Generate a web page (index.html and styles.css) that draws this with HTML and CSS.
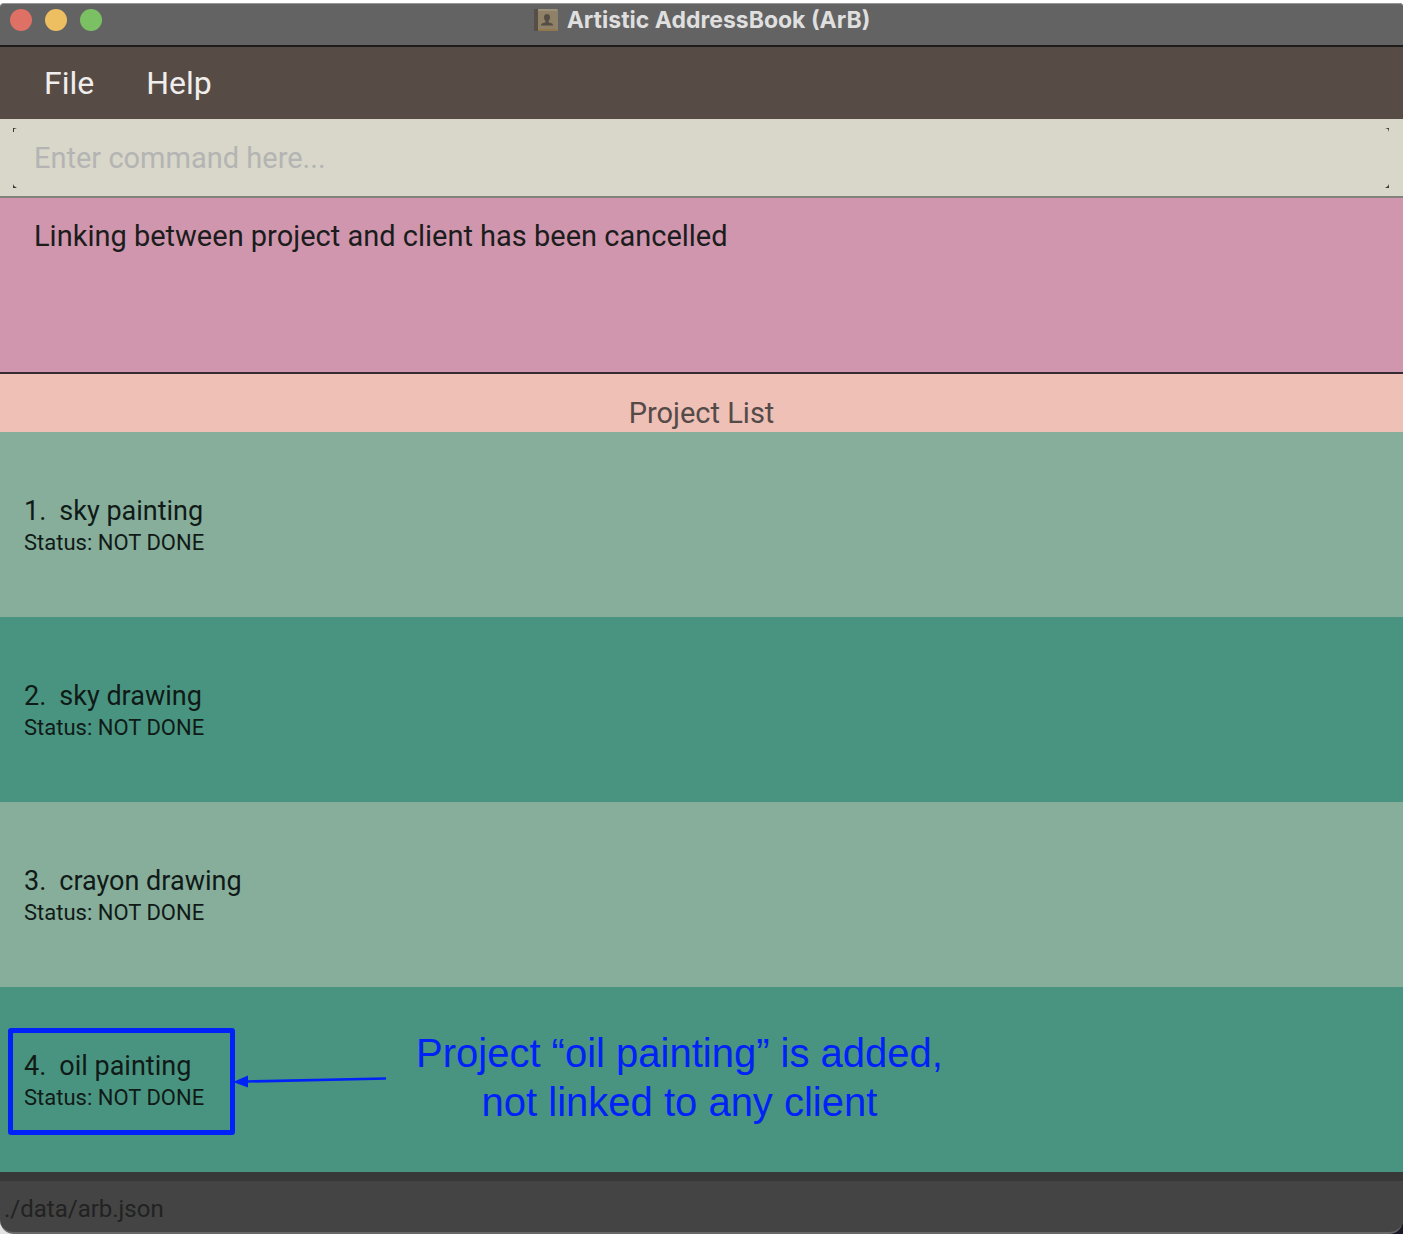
FILE: index.html
```html
<!DOCTYPE html>
<html lang="en">
<head>
<meta charset="utf-8">
<title>Artistic AddressBook (ArB)</title>
<link rel="stylesheet" href="styles.css">
</head>
<body>
<div class="window">
  <header class="titlebar">
    <div class="controls">
      <button class="control control-close" aria-label="Close"></button>
      <button class="control control-minimize" aria-label="Minimize"></button>
      <button class="control control-zoom" aria-label="Zoom"></button>
    </div>
    <h1 class="title">
      <svg class="title-icon" viewBox="0 0 26 24" aria-hidden="true">
        <rect x="1" y="1" width="24" height="22" rx="1" fill="#8f8168"/>
        <rect x="1" y="1" width="4" height="22" fill="#574f47"/>
        <path d="M5 1H24V3H5z" fill="#9b9078"/>
        <path d="M5 21H24V23H5z" fill="#94784d"/>
        <path d="M14 6c-2 0-3 1.500-3 3.500 0 1.500.7 2.800 1.500 3.500v1.200L9 15.500c-.8.400-1 1-1 2h12c0-1-.2-1.600-1-2l-3.500-1.300V13c.8-.7 1.500-2 1.500-3.500C17 7.500 16 6 14 6z" fill="#554d43"/>
      </svg>
      <span>Artistic AddressBook (ArB)</span>
    </h1>
  </header>
  <nav class="menubar">
    <button class="menu">File</button>
    <button class="menu">Help</button>
  </nav>
  <div class="command">
    <div class="command-frame">
      <input class="command-input" type="text" aria-label="Command" placeholder="Enter command here...">
      <svg class="corner corner-tl" viewBox="0 0 4 4" aria-hidden="true"><path d="M0 0H4L1 1V4H0z"/></svg>
      <svg class="corner corner-tr" viewBox="0 0 4 4" aria-hidden="true"><path d="M0 0H4V4L3 1z"/></svg>
      <svg class="corner corner-bl" viewBox="0 0 4 4" aria-hidden="true"><path d="M0 0L1 2L4 4H0z"/></svg>
      <svg class="corner corner-br" viewBox="0 0 4 4" aria-hidden="true"><path d="M4 0V4H0L3 2z"/></svg>
    </div>
  </div>
  <div class="result" role="status">Linking between project and client has been cancelled</div>
  <main>
    <h2 class="list-title">Project List</h2>
    <ol class="projects">
      <li class="project">
        <div class="name"><span>1.</span><span>sky painting</span></div>
        <div class="status">Status: NOT DONE</div>
      </li>
      <li class="project">
        <div class="name"><span>2.</span><span>sky drawing</span></div>
        <div class="status">Status: NOT DONE</div>
      </li>
      <li class="project">
        <div class="name"><span>3.</span><span>crayon drawing</span></div>
        <div class="status">Status: NOT DONE</div>
      </li>
      <li class="project">
        <div class="name"><span>4.</span><span>oil painting</span></div>
        <div class="status">Status: NOT DONE</div>
        <div class="highlight"></div>
        <svg class="arrow" viewBox="0 0 154 16" aria-hidden="true">
          <path d="M14 8.500L153 5.500" stroke="#0022f8" stroke-width="2.600"/>
          <path d="M0 9L15 2.500V14.500z" fill="#0022f8"/>
        </svg>
        <p class="note">Project “oil painting” is added,<br>not linked to any client</p>
      </li>
    </ol>
  </main>
  <footer class="statusbar">./data/arb.json</footer>
</div>
</body>
</html>
```
FILE: styles.css
```css
* {
  box-sizing: border-box;
}

body {
  margin: 0;
  padding: 3px 1px 4px 0;
  background: #fff;
  color: #1b1c1c;
  font-family: Roboto, "Liberation Sans", sans-serif;
  font-size: 29px;
}

button,
input {
  border: 0;
  padding: 0;
  background: none;
  font: inherit;
}

.window {
  border-radius: 4px 4px 0 0;
  background: linear-gradient(to right, #e4e4e4 50%, #191927 50%);
}

.titlebar {
  display: grid;
  grid-template-columns: 1fr auto 1fr;
  align-items: center;
  height: 44px;
  padding: 0 10px 10px;
  border-top: 1px solid #979797;
  border-bottom: 2px solid #1f1d1c;
  border-radius: 4px 4px 0 0;
  background: #636363;
}

.controls {
  display: flex;
  gap: 13px;
}

.control {
  width: 22px;
  height: 22px;
  border-radius: 50%;
}

.control-close {
  background: #df7065;
}

.control-minimize {
  background: #edbf61;
}

.control-zoom {
  background: #7bc163;
}

.title {
  display: flex;
  align-items: center;
  gap: 8px;
  margin: 0;
  color: #dfdfdf;
  font-family: Inter, sans-serif;
  font-size: 23px;
  line-height: 24px;
}

.title-icon {
  width: 26px;
  height: 24px;
}

.menubar {
  display: flex;
  gap: 52px;
  height: 72px;
  padding: 0 44px;
  background: #574b46;
}

.menu {
  color: #f0eeed;
  font-size: 32px;
}

.command {
  padding: 9px 14px 8px 13px;
  border-bottom: 2px solid #83817a;
  background: #d9d7c9;
}

.command-frame {
  position: relative;
}

.command-input {
  display: block;
  width: 100%;
  height: 60px;
  padding: 0 21px;
}

.command-input::placeholder {
  color: #b3b4b3;
  opacity: 1;
}

.corner {
  position: absolute;
  width: 4px;
  height: 4px;
  fill: #383735;
}

.corner-tl {
  top: 0;
  left: 0;
}

.corner-tr {
  top: 0;
  right: 0;
}

.corner-bl {
  bottom: 0;
  left: 0;
}

.corner-br {
  right: 0;
  bottom: 0;
}

.result {
  min-height: 176px;
  padding: 20px 34px;
  border-bottom: 2px solid #352b32;
  background: #d096ae;
  line-height: 36px;
}

.list-title {
  margin: 0;
  padding-top: 20px;
  background: #efc0b6;
  color: #544b49;
  font-size: 29px;
  font-weight: 400;
  line-height: 38px;
  text-align: center;
}

.projects {
  margin: 0;
  padding: 0;
  list-style: none;
}

.project {
  position: relative;
  height: 185px;
  padding: 62px 24px;
  background: #87ad9b;
  color: #101a17;
}

.project:nth-child(even) {
  background: #499480;
}

.name {
  display: flex;
  gap: 13px;
  font-size: 27px;
  line-height: 34px;
}

.status {
  font-size: 22px;
  line-height: 30px;
}

.highlight {
  position: absolute;
  top: 41px;
  left: 8px;
  width: 227px;
  height: 107px;
  border: 5px solid #0022f8;
  border-radius: 3px;
}

.arrow {
  position: absolute;
  top: 86px;
  left: 233px;
  width: 154px;
  height: 16px;
}

.note {
  position: absolute;
  top: 42px;
  left: 416px;
  margin: 0;
  color: #0022f8;
  font-family: "Liberation Sans", Arial, sans-serif;
  font-size: 40px;
  line-height: 49px;
  text-align: center;
  white-space: nowrap;
}

.statusbar {
  padding: 10px 4px 4px;
  border-top: 9px solid #383838;
  border-bottom: 2px solid #686868;
  border-radius: 0 0 14px 14px;
  background: #444;
  color: #222;
  font-size: 24px;
  line-height: 37px;
}
```
